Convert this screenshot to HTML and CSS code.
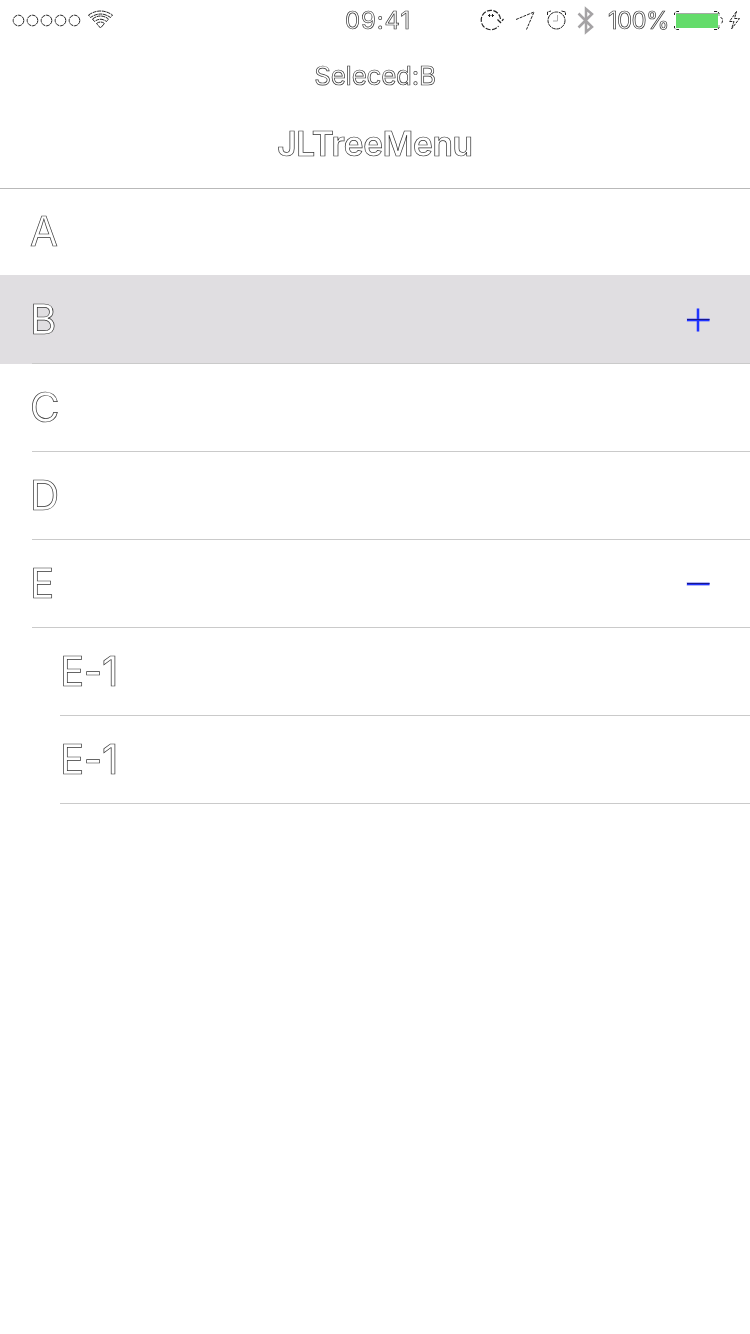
FILE: index.html
```html
<!DOCTYPE html>
<html lang="en">
<head>
<meta charset="utf-8">
<title>JLTreeMenu</title>
<link rel="stylesheet" href="styles.css">
</head>
<body>
<header class="header">
  <div class="status">
    <svg class="signal" width="120" height="40" viewBox="0 0 120 40">
      <g class="line ring"><circle cx="18.5" cy="20.5" r="5.3"/><circle cx="32.5" cy="20.5" r="5.3"/><circle cx="46.5" cy="20.5" r="5.3"/><circle cx="60.5" cy="20.5" r="5.3"/><circle cx="74.5" cy="20.5" r="5.3"/></g>
      <path class="line ring" d="M88.5 15Q100.500 7 112.500 15L110.500 17.500Q100.500 10.500 90.500 17.500ZM92.500 19Q100.500 13 108.500 19L106.500 21.500Q100.500 17 94.500 21.500ZM96.500 23.500Q100.500 20.500 104.500 23.500L100.500 28Z"/>
    </svg>
    <time class="clock">09:41</time>
    <div class="indicators">
      <svg width="130" height="40" viewBox="475 0 130 40">
        <path class="line lock" d="M500.500 19A9.700 9.700 0 1 0 498.500 26M497.500 19.500L500.500 22.500L503.500 19"/>
        <path class="line" d="M488 15.500H490.500M491.500 15.500H494M489.500 14V17M492.500 14V17"/>
        <path class="line dotted" d="M516 19.500L534 12L526.500 29.500"/>
        <circle class="line ring" cx="556.500" cy="20.500" r="8.500"/>
        <path class="line ring" d="M547.500 15V12L551 11M561.500 11L565.500 12V15"/>
        <path class="hands" d="M557.500 15V21H553"/>
        <path class="bluetooth" d="M578.500 13.500L592 27L586 32V9L592 14L578.500 27.500"/>
      </svg>
      <span class="percent">100%</span>
      <svg width="80" height="40" viewBox="670 0 80 40">
        <path class="line dotted" d="M674.500 15V13L676.500 11.500H679M714 11.500H717L719 13V16M674.500 26V28L676.500 29.500H679M714 29.500H717L719 28V25M720.500 17.500Q722.500 17.500 722.500 20.500Q722.500 23.500 720.500 23.500"/>
        <rect x="676" y="13" width="42" height="15" fill="#64dc6b"/>
        <path d="M676 13.500H717.500" stroke="#a5aaa5" fill="none"/>
        <path class="line dotted" d="M736.500 11.500L729.500 21.500H734L731.500 29L739.500 18.500H734.500Z"/>
      </svg>
    </div>
  </div>
  <p class="selected">Seleced:B</p>
  <h1 class="title">JLTreeMenu</h1>
</header>
<main class="tree">
  <div class="row first"><span>A</span></div>
  <div class="row active"><span>B</span>
    <svg class="toggle" width="24" height="24" viewBox="0 0 24 24"><path class="halo" d="M.5 12H23.500M12 .5V23.500"/><path class="blue" d="M1 12H23.500M12 .5V23.500"/><path class="dark" d="M1 11.500H23.500"/></svg>
  </div>
  <div class="row"><span>C</span></div>
  <div class="row"><span>D</span></div>
  <div class="row"><span>E</span>
    <svg class="toggle" width="24" height="24" viewBox="0 0 24 24"><path class="halo" d="M.5 12H23.500"/><path class="blue" d="M1 12H23.500"/><path class="dark" d="M1 11.500H23.500"/></svg>
  </div>
  <div class="row child"><span>E-1</span></div>
  <div class="row child"><span>E-1</span></div>
</main>
</body>
</html>
```
FILE: styles.css
```css
* { box-sizing: border-box; }
body {
  margin: 0;
  min-height: 1334px;
  background: #fff;
  color: #fff;
  font-family: Inter, "Liberation Sans", sans-serif;
  -webkit-text-stroke: 0.7px #333;
}
.clock, .percent, .selected, .title, .row span { will-change: transform; }
.header {
  height: 189px;
  border-bottom: 1px solid #b9b9b9;
  text-align: center;
}
.status {
  display: grid;
  grid-template-columns: 300px 156px 294px;
  height: 40px;
}
.status svg { display: block; }
.clock { font-size: 24px; line-height: 41px; letter-spacing: 0.9px; }
.indicators { display: flex; padding-left: 19px; }
.percent { width: 65px; font-size: 24px; line-height: 41px; white-space: nowrap; letter-spacing: -0.7px; text-align: left; padding-left: 3px; }
.line { fill: none; stroke: #222; stroke-width: 1; }
.ring { stroke-dasharray: 4 0.7; }
.dotted { stroke-dasharray: 3 1; }
.lock { stroke-width: 1.2; stroke-dasharray: 5 1.5; }
.hands { fill: none; stroke: #aaa; }
.bluetooth { fill: none; stroke: #a5a3a5; stroke-width: 2.5; }
.selected { height: 72px; margin: 0; font-size: 26px; line-height: 72px; font-weight: 400; letter-spacing: -0.25px; }
.title { height: 66px; margin: 0; font-size: 33.5px; line-height: 65px; font-weight: 600; letter-spacing: -0.4px; }
.row {
  display: flex;
  justify-content: space-between;
  height: 88px;
  padding: 0 40px 0 30px;
  font-size: 40.5px;
  line-height: 88px;
  letter-spacing: -0.5px;
  background: linear-gradient(#cacaca, #cacaca) 32px 100% / 100% 1px no-repeat;
}
.first { height: 86px; line-height: 85px; background: none; }
.active { height: 89px; line-height: 89px; background-color: #e0dee1; }
.row.child { padding-left: 60px; background: linear-gradient(#cacaca, #cacaca) 60px 100% / 100% 1px no-repeat; }
.toggle { align-self: center; overflow: visible; }
.halo { fill: none; stroke: #c9c9f0; stroke-width: 3.4; }
.blue { fill: none; stroke: #2034ff; stroke-width: 2.4; }
.dark { fill: none; stroke: #17178c; stroke-width: 1; }
```
